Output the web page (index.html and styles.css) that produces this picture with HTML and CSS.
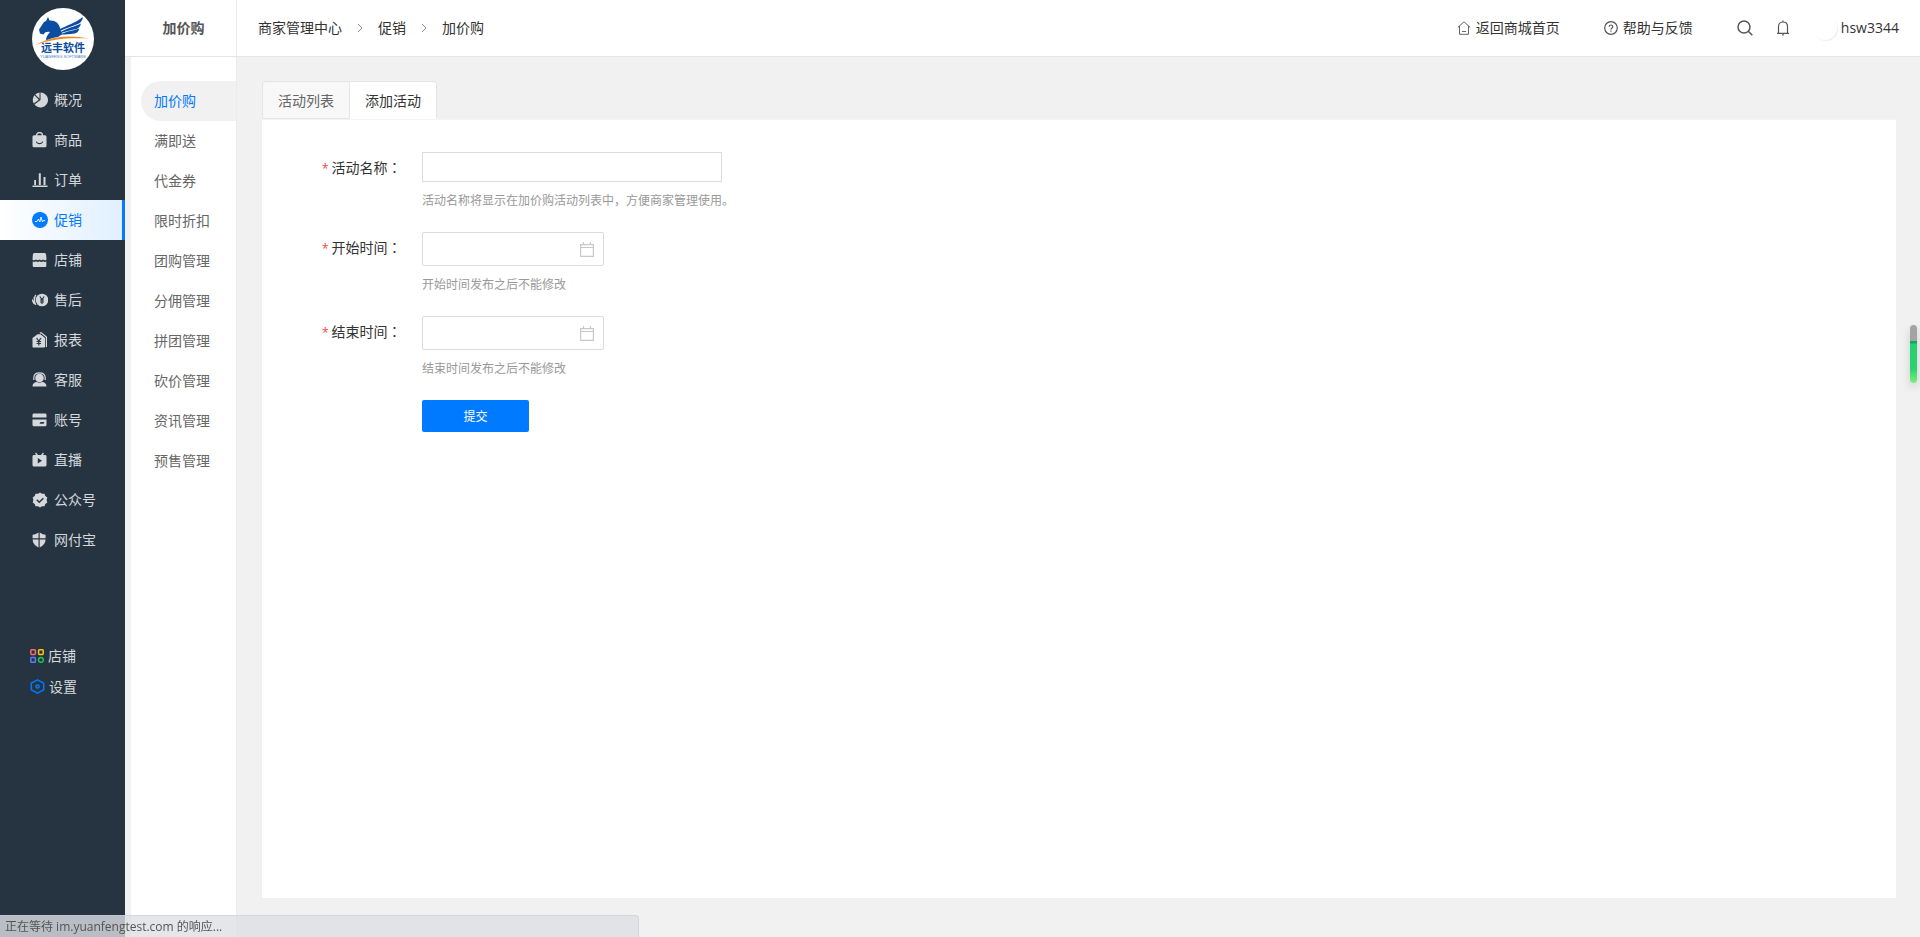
FILE: index.html
```
<!DOCTYPE html>
<html lang="zh-CN">
<head>
    <meta charset="UTF-8">
    <meta name="viewport" content="width=device-width, initial-scale=1.0">
    <title>加价购 - 商家管理中心</title>
    <link rel="stylesheet" href="styles.css">
</head>
<body>
    <!-- 左侧主菜单 -->
    <aside class="sidebar">
        <a class="logo" href="#" aria-label="远丰软件">
            <svg width="62" height="62" viewBox="0 0 62 62">
                <circle cx="31" cy="31" r="31" fill="#fff"/>
                <path fill="#0c4da2" d="M7 21.500 12 14l2-1 2-4 1.500 3.500C23 12 27 15 28 20c.3 2 1 4 2.500 6L26 29c-4 .5-8 1.500-12 3.500 0-4 2-6 4-8.500-3-.5-5 0-6.500 2.500L8 25.500z"/>
                <path fill="#0c4da2" d="M27 21.500C35 17.500 43 15 51 9c-.5 3-1.500 5-4 6.500-6 2.500-12 4-19 7.500zM28.500 24c7-4 13-5 20.500-8.500-.8 3-2 4.500-4.500 5.500-5 1-10 2-15.500 4zM29.500 26c6-3 11-3 18-5.500-1 3-2.500 4.500-5 5-5 .7-9 1-12.500 1z"/>
                <path fill="#f08a24" d="M4 37C18 28 38 26.500 57 30.500 38 29.500 20 30.500 4 37z"/>
                <text class="logo-name" x="31" y="44" text-anchor="middle">远丰软件</text>
                <text class="logo-sub" x="31" y="50" text-anchor="middle">YUANFENG SOFTWARE</text>
            </svg>
        </a>
        <nav class="menu">
            <a class="menu-item" href="#">
                <svg class="icon" viewBox="0 0 16 16"><path fill="currentColor" d="M8.500.5a7.500 7.500 0 1 1-6 12L8.500 8z"/><path fill="currentColor" d="M7.500.5v6.300L3.200 2.500A7.500 7.500 0 0 1 7.500.5zM2.400 3.300 6.800 7.700 1.800 11.500A7.500 7.500 0 0 1 2.400 3.300z"/></svg>
                概况
            </a>
            <a class="menu-item" href="#">
                <svg class="icon" viewBox="0 0 16 16"><path fill="none" stroke="currentColor" stroke-width="1.400" d="M4.500 4V3.500a3 3 0 0 1 6 0V4"/><path fill="currentColor" fill-rule="evenodd" d="M2 3.200h11a1.500 1.500 0 0 1 1.500 1.500v9a1.500 1.500 0 0 1-1.500 1.500H2a1.500 1.500 0 0 1-1.500-1.500v-9A1.500 1.500 0 0 1 2 3.200zM3.800 9.800c1 3.200 6.400 3.200 7.400 0l-1-.2c-1 2-4.400 2-5.400 0z"/></svg>
                商品
            </a>
            <a class="menu-item" href="#">
                <svg class="icon" viewBox="0 0 16 16"><path fill="currentColor" d="M.5 13.500h15V15H.5zM2.200 8h1.800v5H2.200zM6.800 1.200h2V13h-2zM11.500 5h2v8h-2z"/></svg>
                订单
            </a>
            <a class="menu-item active" href="#">
                <svg class="icon" viewBox="0 0 16 16"><circle cx="8" cy="8" r="8" fill="#007bff"/><path fill="none" stroke="#fff" stroke-width=".9" stroke-linejoin="round" d="M3 9.500h2L6.500 7l1.300 3L9 5l1.500 5 1-1.500H13"/></svg>
                促销
            </a>
            <a class="menu-item" href="#">
                <svg class="icon" viewBox="0 0 16 16"><path fill="currentColor" d="M2.300 1h10.400c1 0 1.300 1 1.500 2.500l.3 4c-1.200 1.200-2.200 1-3.500 0-1.200 1-2.300 1-3.500 0-1.200 1-2.300 1-3.500 0-1.200 1-2.300 1.200-3.500 0l.3-4C1 2 1.300 1 2.300 1zM.7 9.500c1.300.6 2.300.5 3.300-.2 1.200.8 2.300.8 3.500 0 1.200.8 2.300.8 3.500 0 1 .7 2 .8 3.300.2v4c0 1-.4 1.500-1.500 1.500H2.200c-1 0-1.500-.5-1.500-1.500z"/></svg>
                店铺
            </a>
            <a class="menu-item" href="#">
                <svg class="icon" viewBox="0 0 16 16"><circle cx="10" cy="8" r="6.300" fill="currentColor"/><path fill="none" stroke="#263441" stroke-width="1.100" d="M7.800 4.500 10 7.500l2.200-3M10 7.500v4.500M8 8h4M8 10h4"/><path fill="none" stroke="currentColor" stroke-width="1.300" d="M3.800 2.800C2 5.500 2 9.500 3.800 13M0 7.500l2.200 4.500V5"/></svg>
                售后
            </a>
            <a class="menu-item" href="#">
                <svg class="icon" viewBox="0 0 16 16"><path fill="currentColor" d="M5.500 2.300h3L13 6v8.500c0 .6-.4 1-1 1H1.500c-.6 0-1-.4-1-1V6z"/><path fill="none" stroke="currentColor" stroke-width="1.200" d="M7.800.8h1.500L14.400 5v10"/><path fill="none" stroke="#263441" stroke-width="1.200" d="m4.600 6 2.200 3L9 6M6.800 9v4.500M4.600 9.500H9M4.600 11.500H9"/></svg>
                报表
            </a>
            <a class="menu-item" href="#">
                <svg class="icon" viewBox="0 0 16 16"><circle cx="7.500" cy="6" r="4.300" fill="currentColor"/><path fill="none" stroke="currentColor" stroke-width="1.200" d="M1.800 8V5.500C2.300-.8 12.700-.8 13.200 5.500V8"/><path fill="currentColor" d="M.5 14.500c0-3 2-4.500 4.500-4.500 1.500 1 3.500 1 5 0 2.500 0 4.500 1.500 4.500 4.500z"/></svg>
                客服
            </a>
            <a class="menu-item" href="#">
                <svg class="icon" viewBox="0 0 16 16"><path fill="currentColor" d="M2 1.500h11c1 0 1.500.7 1.500 1.500v2.500H.5V3c0-.8.5-1.500 1.500-1.500z"/><path fill="currentColor" fill-rule="evenodd" d="M.5 7.500h14v5.300c0 .8-.5 1.500-1.500 1.500H2c-1 0-1.500-.7-1.500-1.500zm8 2.400-1 1.800h4l1-1.800z"/></svg>
                账号
            </a>
            <a class="menu-item" href="#">
                <svg class="icon" viewBox="0 0 16 16"><path fill="none" stroke="currentColor" stroke-width="1.300" d="m3.500 1 2 2.500M11.500 1l-2 2.500"/><path fill="currentColor" fill-rule="evenodd" d="M2 3h11c.9 0 1.500.6 1.500 1.500V13c0 .9-.6 1.500-1.500 1.500H2c-.9 0-1.500-.6-1.500-1.500V4.500C.5 3.600 1.100 3 2 3zm3.800 3v5.500l4.200-2.800z"/></svg>
                直播
            </a>
            <a class="menu-item" href="#">
                <svg class="icon" viewBox="0 0 16 16"><path fill="currentColor" d="m8 .5 2 1.300 2.500 0 .8 2.300 2 1.500L14.600 8l.7 2.400-2 1.500-.8 2.300-2.500 0L8 15.500l-2-1.300-2.500 0-.8-2.300-2-1.500L1.400 8 .7 5.600l2-1.500.8-2.300 2.500 0z"/><path fill="none" stroke="#263441" stroke-width="1.500" d="m4.800 7.800 2.400 2.400 4.200-4"/></svg>
                公众号
            </a>
            <a class="menu-item" href="#">
                <svg class="icon" viewBox="0 0 16 16"><path fill="currentColor" d="M6.500.5v5.800H.6V2.800C3 2.500 4.800 1.700 6.500.5zM7.700.5c1.700 1.200 3.500 2 5.900 2.300v3.500H7.700zM.6 7.500h5.900v8C3 13.800.8 11.500.6 7.500zM7.700 7.500h5.900c-.2 4-2.400 6.300-5.900 8z"/></svg>
                网付宝
            </a>
        </nav>
        <nav class="quick">
            <a class="quick-item" href="#">
                <svg width="14" height="14" viewBox="0 0 14 14" fill="none" stroke-width="1.500"><rect x=".8" y=".8" width="4.600" height="4.600" rx=".8" stroke="#f56c6c"/><rect x="8.600" y=".8" width="4.600" height="4.600" rx=".8" stroke="#fcc419"/><rect x=".8" y="8.600" width="4.600" height="4.600" rx=".8" stroke="#5b7cfa"/><circle cx="10.900" cy="10.900" r="2.400" stroke="#23c552"/></svg>
                店铺
            </a>
            <a class="quick-item" href="#">
                <svg width="15" height="15" viewBox="0 0 15 15" fill="none" stroke="#007bff" stroke-width="1.500"><path stroke-linejoin="round" d="m7.500.8 6.200 3.300v6.800l-6.200 3.300-6.200-3.300V4.100z"/><circle cx="7.500" cy="7.500" r="1.600"/></svg>
                设置
            </a>
        </nav>
    </aside>

    <!-- 二级菜单 -->
    <aside class="submenu">
        <h1 class="submenu-title">加价购</h1>
        <nav class="submenu-list">
            <a class="submenu-item active" href="#">加价购</a>
            <a class="submenu-item" href="#">满即送</a>
            <a class="submenu-item" href="#">代金券</a>
            <a class="submenu-item" href="#">限时折扣</a>
            <a class="submenu-item" href="#">团购管理</a>
            <a class="submenu-item" href="#">分佣管理</a>
            <a class="submenu-item" href="#">拼团管理</a>
            <a class="submenu-item" href="#">砍价管理</a>
            <a class="submenu-item" href="#">资讯管理</a>
            <a class="submenu-item" href="#">预售管理</a>
        </nav>
    </aside>

    <div class="page">
        <header class="topbar">
            <nav class="breadcrumb">
                <a href="#">商家管理中心</a>
                <svg width="6" height="10" viewBox="0 0 6 10"><path fill="none" stroke="#888" d="m1 1 4 4-4 4"/></svg>
                <a href="#">促销</a>
                <svg width="6" height="10" viewBox="0 0 6 10"><path fill="none" stroke="#888" d="m1 1 4 4-4 4"/></svg>
                <span>加价购</span>
            </nav>
            <div class="tools">
                <a class="tool-link" href="#">
                    <svg width="14" height="14" viewBox="0 0 14 14" fill="none" stroke="#666"><path d="M.7 6.500 7 .8l6.300 5.700M2.500 5v8.300h9V5M5 10.500h4"/></svg>
                    返回商城首页
                </a>
                <a class="tool-link" href="#">
                    <svg width="14" height="14" viewBox="0 0 14 14" fill="none" stroke="#555" stroke-width="1.200"><circle cx="7" cy="7" r="6.300"/><path d="M5.200 5.700c0-2.300 3.600-2.300 3.600 0C8.800 7 7 6.900 7 8.500M7 9.500v1.200"/></svg>
                    帮助与反馈
                </a>
                <button class="tool-btn" type="button" aria-label="搜索">
                    <svg width="16" height="16" viewBox="0 0 16 16" fill="none" stroke="#555" stroke-width="1.500"><circle cx="7" cy="7" r="6"/><path d="m11.300 11.300 4 4"/></svg>
                </button>
                <button class="tool-btn" type="button" aria-label="消息">
                    <svg width="14" height="16" viewBox="0 0 14 16" fill="none" stroke="#555" stroke-width="1.200"><path d="M1 13.400h12M2.500 13.400V6.500c0-6 9-6 9 0v6.900M7 .5V2M7 13.400v2.300"/></svg>
                </button>
                <a class="user" href="#"><span class="avatar"></span>hsw3344</a>
            </div>
        </header>

        <main class="content">
            <div class="tabs" role="tablist">
                <button class="tab" type="button" role="tab">活动列表</button>
                <button class="tab active" type="button" role="tab">添加活动</button>
            </div>
            <form class="panel">
                <div class="form-row">
                    <label class="form-label" for="activity-name"><em>*</em>活动名称<span class="colon" lang="zh-TW">：</span></label>
                    <div class="form-field">
                        <input class="text-input" id="activity-name" type="text">
                        <p class="hint">活动名称将显示在加价购活动列表中，方便商家管理使用。</p>
                    </div>
                </div>
                <div class="form-row">
                    <label class="form-label" for="start-time"><em>*</em>开始时间<span class="colon" lang="zh-TW">：</span></label>
                    <div class="form-field">
                        <div class="date-box">
                            <input class="date-input" id="start-time" type="text">
                            <svg width="14" height="15" viewBox="0 0 14 15" fill="none" stroke="#c8c8c8" stroke-width="1.200"><path d="M.6 2.600h12.800v11.800H.6zM.6 5.500h12.800M3.500 0v2.600M10.500 0v2.600"/></svg>
                        </div>
                        <p class="hint">开始时间发布之后不能修改</p>
                    </div>
                </div>
                <div class="form-row">
                    <label class="form-label" for="end-time"><em>*</em>结束时间<span class="colon" lang="zh-TW">：</span></label>
                    <div class="form-field">
                        <div class="date-box">
                            <input class="date-input" id="end-time" type="text">
                            <svg width="14" height="15" viewBox="0 0 14 15" fill="none" stroke="#c8c8c8" stroke-width="1.200"><path d="M.6 2.600h12.800v11.800H.6zM.6 5.500h12.800M3.500 0v2.600M10.500 0v2.600"/></svg>
                        </div>
                        <p class="hint">结束时间发布之后不能修改</p>
                    </div>
                </div>
                <button class="submit-btn" type="button">提交</button>
            </form>
        </main>
    </div>

    <div class="float-handle"></div>
    <div class="status-bar">正在等待 im.yuanfengtest.com 的响应...</div>
</body>
</html>
```
FILE: styles.css
```
* {
    box-sizing: border-box;
}

body {
    margin: 0;
    min-height: 100vh;
    display: flex;
    background-color: #f1f1f1;
    color: #333;
    font-family: "Open Sans", "Noto Sans CJK SC", sans-serif;
    font-size: 14px;
    line-height: 20px;
}

a {
    color: inherit;
    text-decoration: none;
}

button,
input {
    font-family: inherit;
}

svg {
    display: block;
    flex-shrink: 0;
}

/* 主菜单 */
.sidebar {
    width: 125px;
    flex-shrink: 0;
    background-color: #263441;
    color: #d5d8db;
}

.logo {
    display: flex;
    justify-content: center;
    padding: 8px 0 10px;
}

.logo-name {
    font-family: "Noto Sans CJK SC", sans-serif;
    font-size: 11px;
    font-weight: bold;
    fill: #0c4da2;
}

.logo-sub {
    font-family: "Liberation Sans", sans-serif;
    font-size: 4px;
    fill: #4a7fc4;
}

.menu-item {
    display: flex;
    align-items: center;
    gap: 6px;
    height: 40px;
    padding-left: 32px;
}

.menu-item.active {
    color: #007bff;
    background: linear-gradient(to right, #fff, #e0efff);
    border-right: 3px solid #007bff;
}

.icon {
    width: 16px;
    height: 16px;
}

.quick {
    margin-top: 80px;
}

.quick-item {
    display: flex;
    align-items: center;
    gap: 4px;
    height: 31px;
    padding-left: 30px;
}

/* 二级菜单 */
.submenu {
    width: 112px;
    flex-shrink: 0;
    display: flex;
    flex-direction: column;
}

.submenu-title {
    margin: 0;
    height: 57px;
    padding-left: 6px;
    background-color: #fff;
    border-right: 1px solid #e8e8ee;
    border-bottom: 1px solid #e5e5e8;
    color: #555;
    font-size: 14px;
    line-height: 56px;
    text-align: center;
}

.submenu-list {
    flex: 1;
    margin-left: 6px;
    padding: 24px 0 0 10px;
    background-color: #fff;
    border-right: 1px solid #ebebeb;
}

.submenu-item {
    display: block;
    height: 40px;
    padding-left: 13px;
    color: #666;
    line-height: 40px;
}

.submenu-item.active {
    color: #007bff;
    background-color: #f1f1f1;
    border-radius: 20px 0 0 20px;
}

/* 顶部栏 */
.page {
    flex: 1;
    min-width: 0;
    display: flex;
    flex-direction: column;
}

.topbar {
    height: 57px;
    padding: 0 21px;
    display: flex;
    align-items: center;
    justify-content: space-between;
    background-color: #fff;
    border-bottom: 1px solid #e5e5e5;
}

.breadcrumb {
    display: flex;
    align-items: center;
    gap: 15px;
}

.tools {
    display: flex;
    align-items: center;
}

.tool-link {
    display: flex;
    align-items: center;
    gap: 5px;
    margin-right: 44px;
}

.tool-btn {
    padding: 0;
    margin-right: 23px;
    border: none;
    background: none;
    cursor: pointer;
}

.user {
    display: flex;
    align-items: center;
    gap: 4px;
}

.avatar {
    width: 24px;
    height: 24px;
    border-radius: 50%;
    background-color: #fff;
    box-shadow: 1px 1px 1px #eee;
}

/* 内容区 */
.content {
    flex: 1;
    display: flex;
    flex-direction: column;
    padding: 24px 24px 39px 25px;
}

.tabs {
    display: flex;
}

.tab {
    height: 38px;
    padding: 0 15px;
    border: 1px solid #e4e4e4;
    border-radius: 4px 0 0 0;
    background-color: #f8f8f8;
    color: #666;
    font-size: 14px;
    cursor: pointer;
}

.tab.active {
    border-left: none;
    border-bottom-color: #fff;
    border-radius: 0 4px 0 0;
    background-color: #fff;
    color: #333;
}

.panel {
    flex: 1;
    padding: 32px 60px;
    border-top: 1px solid #f4f4f4;
    background-color: #fff;
}

.form-row {
    display: flex;
    margin-bottom: 21px;
}

.form-label {
    width: 100px;
    height: 30px;
    line-height: 30px;
    white-space: nowrap;
}

.form-label em {
    margin-right: 3px;
    color: #f5463d;
    font-style: normal;
    font-size: 12px;
}

.colon {
    font-family: "Noto Sans CJK TC", sans-serif;
}

.text-input,
.date-box {
    display: block;
    border: 1px solid #dcdcdc;
    background-color: #fff;
}

.text-input {
    width: 300px;
    height: 30px;
    padding: 0 10px;
}

.date-box {
    display: flex;
    align-items: center;
    width: 182px;
    height: 34px;
    padding-right: 9px;
    border-radius: 2px;
}

.date-input {
    flex: 1;
    min-width: 0;
    height: 30px;
    padding: 0 10px;
    border: none;
    background: none;
}

.hint {
    margin: 9px 0 0;
    color: #999;
    font-size: 12px;
}

.submit-btn {
    width: 107px;
    height: 32px;
    margin-left: 100px;
    border: none;
    border-radius: 2px;
    background-color: #007bff;
    color: #fff;
    font-size: 12px;
    cursor: pointer;
}

/* 浮动条和状态栏 */
.float-handle {
    position: fixed;
    top: 325px;
    right: 3px;
    width: 7px;
    height: 58px;
    border-radius: 4px;
    background: linear-gradient(to bottom, #a3a3a3 16px, #10a85c 16px, #10a85c 18px, #25d070 19px, #2bd36e 44px, #7df07d);
    box-shadow: 0 4px 8px rgba(0, 0, 0, 0.15);
}

.status-bar {
    position: fixed;
    left: 0;
    bottom: 0;
    width: 639px;
    height: 22px;
    padding-left: 5px;
    border: 1px solid rgba(200, 203, 208, 0.6);
    border-width: 1px 1px 0 0;
    border-radius: 0 4px 0 0;
    background-color: rgba(222, 224, 229, 0.8);
    color: #555;
    font-size: 12px;
    line-height: 22px;
}
```
